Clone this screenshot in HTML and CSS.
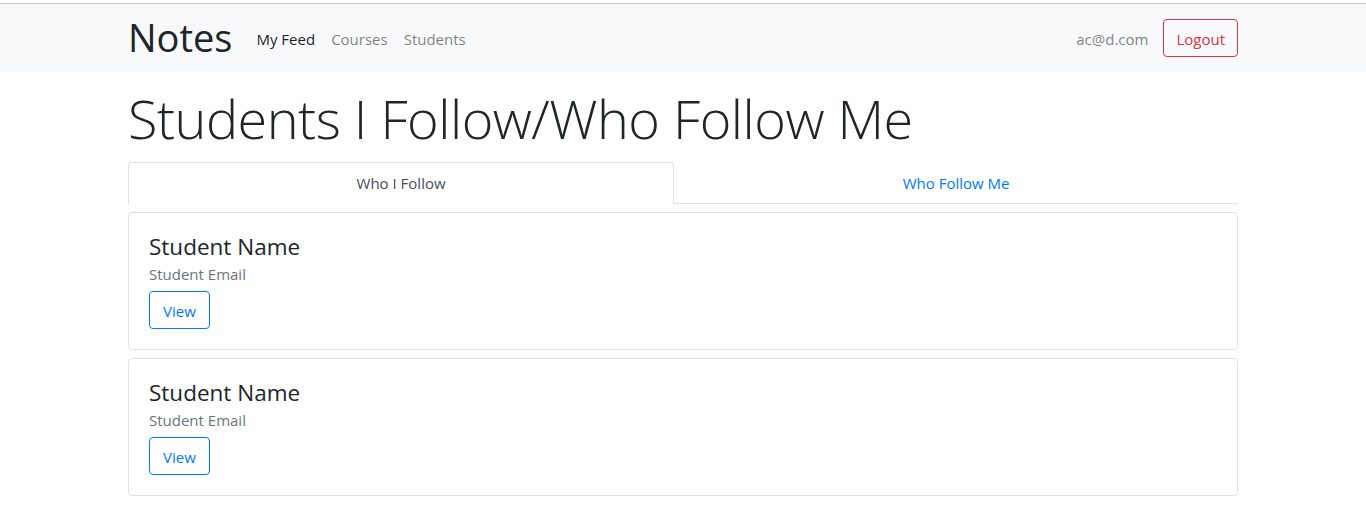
FILE: index.html
```html
<!DOCTYPE html>
<html>
<head>
<meta charset="utf-8">
<link rel="stylesheet" href="styles.css">
</head>
<body>
<div class="topline"></div>
<nav class="navbar">
  <div class="container nav-inner">
    <a class="brand">Notes</a>
    <ul class="nav-links">
      <li class="active">My Feed</li>
      <li>Courses</li>
      <li>Students</li>
    </ul>
    <div class="nav-right">
      <span class="user">ac@d.com</span>
      <button class="btn btn-danger-outline">Logout</button>
    </div>
  </div>
</nav>
<main class="container">
  <h1 class="title">Students I Follow/Who Follow Me</h1>
  <div class="tabs">
    <div class="tab active">Who I Follow</div>
    <div class="tab">Who Follow Me</div>
  </div>
  <div class="card">
    <h4 class="card-title">Student Name</h4>
    <div class="card-sub">Student Email</div>
    <button class="btn btn-primary-outline">View</button>
  </div>
  <div class="card">
    <h4 class="card-title">Student Name</h4>
    <div class="card-sub">Student Email</div>
    <button class="btn btn-primary-outline">View</button>
  </div>
</main>
</body>
</html>
```

FILE: styles.css
```css
* { box-sizing: border-box; }
html, body { margin: 0; padding: 0; }
body {
  font-family: "Open Sans", "Noto Sans", sans-serif;
  font-size: 16px;
  color: #212529;
  background: #fff;
}
.topline {
  height: 4px;
  border-bottom: 1px solid #c8c8c8;
}
.container {
  width: 1140px;
  margin: 0 auto;
  padding: 0 15px;
}
.navbar {
  background: #f8f9fa;
  height: 68px;
}
.nav-inner {
  display: flex;
  align-items: center;
  height: 100%;
}
.brand {
  font-size: 38px;
  line-height: 1;
  color: #212529;
  margin-right: 24px;
  margin-top: -2px;
}
.nav-links {
  display: flex;
  list-style: none;
  margin: 0;
  padding: 0;
  gap: 16px;
  flex: 1;
}
.nav-links li {
  color: rgba(0,0,0,0.5);
  font-size: 15px;
  padding-top: 2px;
}
.nav-links li.active { color: rgba(0,0,0,0.9); }
.nav-right {
  display: flex;
  align-items: center;
  gap: 15px;
}
.user { color: rgba(0,0,0,0.5); font-size: 15px; padding-top: 2px; }
.btn {
  font-family: inherit;
  font-size: 15px;
  height: 38px;
  padding: 2px 12px 0;
  border-radius: 4px;
  background: transparent;
  cursor: pointer;
}
.btn-danger-outline { border: 1px solid #dc3545; color: #dc3545; }
.btn-primary-outline { border: 1px solid #007bff; color: #007bff; padding: 2px 13px 0; }
.title {
  font-size: 54px;
  font-weight: 300;
  line-height: 1.2;
  margin: 14px 0 11px;
  letter-spacing: -0.5px;
}
.tabs {
  display: flex;
  border-bottom: 1px solid #dee2e6;
  margin-bottom: 8px;
}
.tab {
  flex: 1 1 auto;
  text-align: center;
  height: 42px;
  line-height: 40px;
  padding: 0 16px;
  color: #007bff;
  font-size: 15px;
  border: 1px solid transparent;
  border-radius: 4px 4px 0 0;
  margin-bottom: -1px;
}
.tab.active {
  color: #495057;
  border-color: #dee2e6 #dee2e6 #fff;
  background: #fff;
}
.card {
  border: 1px solid #dee2e6;
  border-radius: 4px;
  padding: 20px;
  height: 138px;
  margin-bottom: 8px;
}
.card-title {
  font-size: 22.5px;
  font-weight: 400;
  margin: 0 0 3px;
  line-height: 1.2;
}
.card-sub {
  color: #6c757d;
  font-size: 15px;
  margin-bottom: 6px;
  line-height: 1.5;
}
```
